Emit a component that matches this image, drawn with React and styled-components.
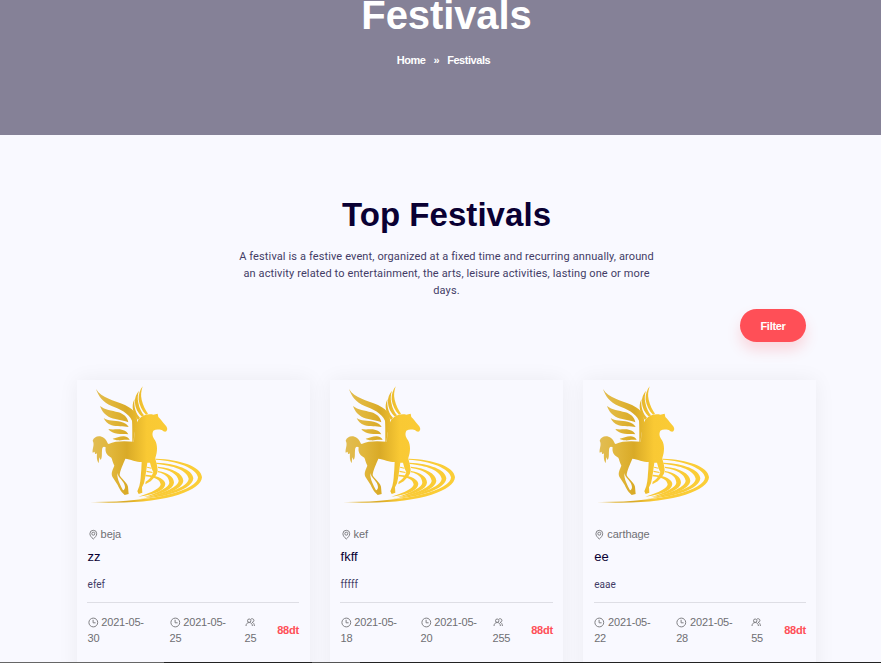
import React from "react";
import styled, { createGlobalStyle } from "styled-components";

const GlobalStyle = createGlobalStyle`
  * { box-sizing: border-box; }
  body { margin: 0; background: #f9f9ff; overflow: hidden; }
  h1, h2, h3, p { margin: 0; }
`;

const Page = styled.div`
  width: 893px;
  height: 663px;
  overflow: hidden;
  display: flex;
  flex-direction: column;
  background: #f9f9ff;
  font-family: "Liberation Sans", Arial, sans-serif;
`;

const Banner = styled.header`
  flex: 0 0 135px;
  background: #858197;
  color: #fff;
  display: flex;
  flex-direction: column;
  align-items: center;
`;

const BannerTitle = styled.h1`
  font-size: 40px;
  line-height: 30px;
  letter-spacing: -0.1px;
`;

const Breadcrumb = styled.nav`
  display: flex;
  gap: 8px;
  margin: 22px 0 0 -6px;
  font-size: 11px;
  line-height: 16px;
  font-weight: 700;
  letter-spacing: -0.45px;
`;

const Content = styled.main`
  flex: 0 0 527px;
  overflow: hidden;
  display: flex;
  flex-direction: column;
  align-items: center;
  padding-top: 59px;
`;

const Heading = styled.h2`
  font-size: 33px;
  line-height: 41px;
  letter-spacing: 0.05px;
  color: #0a0033;
`;

const Intro = styled.p`
  width: 422px;
  margin-top: 13px;
  font: 11px/17px Roboto, sans-serif;
  letter-spacing: 0.12px;
  text-align: center;
  color: #433c66;
`;

const Actions = styled.div`
  width: 739px;
  display: flex;
  justify-content: flex-end;
  padding: 10px 10px 0 0;
`;

const FilterButton = styled.button`
  width: 66px;
  height: 33px;
  padding: 0;
  border: 0;
  border-radius: 17px;
  background: #ff4f57;
  color: #fff;
  font: 700 11px "Liberation Sans", Arial, sans-serif;
  letter-spacing: -0.3px;
  box-shadow: 0 8px 14px rgba(255, 79, 87, 0.2);
`;

const Cards = styled.section`
  display: grid;
  grid-template-columns: repeat(3, 233px);
  gap: 20px;
  margin-top: 38px;
`;

const CardBox = styled.article`
  height: 300px;
  padding: 0 10px;
  display: flex;
  flex-direction: column;
  background: #f9f9ff;
  box-shadow: 0 0 20px rgba(0, 0, 0, 0.06);

  &:first-child { padding-right: 11px; }
  &:last-child { padding-left: 10.7px; }
`;

const Logo = styled.svg`
  display: block;
  flex: none;
  width: 130px;
  height: 130px;
  margin-left: -10px;
`;

const Place = styled.div`
  display: flex;
  align-items: center;
  gap: 2px;
  margin: 16px 0 0 0.6px;
  font-size: 11px;
  line-height: 16px;
  letter-spacing: -0.05px;
  color: #6f6f73;
`;

const Name = styled.h3`
  margin: 5px 0 0 0.6px;
  font-size: 13px;
  line-height: 20px;
  font-weight: 400;
  color: #0a0033;
`;

const Description = styled.p`
  margin: 9px 0 0 0.6px;
  font: 10px/17px Roboto, sans-serif;
  color: #433c66;
`;

const Details = styled.footer`
  display: grid;
  grid-template-columns: ${(p) => p.$columns} 1fr;
  margin-top: 9px;
  padding-top: 11px;
  border-top: 1px solid #dedee5;
  font-size: 11px;
  line-height: 16px;
  letter-spacing: -0.2px;
  color: #6f6f73;
`;

const Detail = styled.div`
  padding-left: 0.5px;
  svg { vertical-align: -2px; }
`;

const Price = styled.strong`
  align-self: center;
  text-align: right;
  color: #ff4f57;
`;

const Footing = styled.div`
  flex: 0 0 1px;
  background: linear-gradient(90deg, #666 0 164px, #222 164px 312px, #555 312px 360px, #222 360px);
`;

const LineIcon = styled.svg.attrs({ viewBox: "0 0 11 11", width: 11, height: 11, fill: "none", stroke: "#808084" })``;

const PinIcon = () => (
  <LineIcon>
    <path d="M5.3 10C3.4 8.3 1.9 6.7 1.9 4.7a3.4 3.4 0 0 1 6.8 0c0 2-1.5 3.6-3.4 5.3Z" />
    <circle cx="5.3" cy="4.7" r="1.5" />
  </LineIcon>
);

const ClockIcon = () => (
  <LineIcon>
    <circle cx="5.3" cy="5.5" r="4.4" />
    <path d="M5.1 2.8v3h2.5" />
  </LineIcon>
);

const PeopleIcon = () => (
  <LineIcon>
    <circle cx="4.2" cy="3.7" r="1.7" />
    <path d="M1 9c0-2 1.2-3.5 3.2-3.5S7.4 7 7.4 9M6 2.1a1.8 1.8 0 1 1 1 3.2c1.4.3 2.4 1.7 2.4 3.7" />
  </LineIcon>
);

const feathers = [
  "M78 57C95 85 130 90 165 105C200 122 203 140 201 165C193 185 192 200 191 216L187 216C187 190 187 165 186 152C175 128 150 118 125 108C98 97 85 78 78 57Z",
  "M90 108C105 120 125 121 145 127C160 131 173 142 175 157C160 149 140 150 122 143C105 136 96 124 90 108Z",
  "M101 144C113 153 135 151 152 155C166 158 173 164 176 171C160 168 140 171 125 166C112 161 105 153 101 144Z",
  "M115 177C128 180 145 176 158 180C168 183 172 187 175 193C160 190 148 194 135 190C126 187 119 183 115 177Z",
  "M128 206C140 205 150 198 162 199C172 200 176 204 179 210C165 207 155 212 145 211C138 210 132 209 128 206Z",
  "M218 49C213 65 212 75 215 89C219 105 226 120 234 131L228 134C216 122 208 105 206 89C205 72 210 60 218 49Z",
  "M207 62C203 75 202 85 205 98C208 115 215 127 222 136L216 140C204 128 196 115 195 98C194 82 199 72 207 62Z",
  "M194 87C192 98 193 108 196 119C200 132 205 137 210 143L204 150C194 138 189 125 188 112C188 100 190 94 194 87Z",
];

const body =
  "M192 215C193 185 195 165 206 148C216 136 235 130 250 134L263 131L265 141C273 148 276 155 285 164C292 171 294 178 289 184C284 187 280 183 275 180C265 178 257 178 250 182C245 192 248 200 255 211C263 225 263 245 256 264C257 274 263 286 263 302C262 315 252 322 242 334L226 343L227 335C236 330 244 322 250 306C246 300 243 290 240 278L232 278C229 300 227 318 222 340L216 352L217 368L206 372L202 364L208 348C213 330 212 315 214 298L215 276C200 276 180 268 166 266C160 282 150 300 149 315C152 325 170 335 174 350L176 372L164 375L155 366C150 360 145 350 143 345L127 320C122 308 129 298 133 287C127 275 127 268 124 263C108 255 105 244 107 232C100 228 96 232 96 242C95 255 97 262 92 270L88 262L86 280C80 272 80 262 81 250C76 255 74 250 74 245L68 248C66 235 75 225 68 212C72 198 90 194 102 204C112 212 112 222 116 222C135 212 165 213 192 215Z";

const rings = [
  "M258 266C330 268 395 290 396 322C394 365 270 409 60 396C250 398 385 360 384 322C380 295 320 272 258 269Z",
  "M259 278C320 281 368 298 370 325C368 356 300 381 205 388C290 374 355 350 356 326C352 302 310 286 259 282Z",
  "M264 290C310 295 338 310 340 332C338 356 290 376 225 383C285 368 325 350 326 332C322 312 300 299 264 294Z",
  "M264 303C295 308 312 322 312 338C310 358 275 373 220 382C270 366 298 350 298 338C297 322 285 311 264 307Z",
  "M227 314C270 317 285 330 286 342C284 360 260 373 205 380C250 367 272 353 272 343C270 332 260 322 226 319Z",
  "M230 302L248 306L247 309L229 306ZM232 290L244 293L244 296L231 293Z",
];

const FestivalLogo = ({ id }) => (
  <Logo viewBox="21 30 390 390">
    <defs>
      <linearGradient id={id} gradientUnits="userSpaceOnUse" x1="65" y1="0" x2="396" y2="0">
        <stop offset="0" stopColor="#e1bd55" />
        <stop offset="0.18" stopColor="#e1b63a" />
        <stop offset="0.32" stopColor="#d9aa27" />
        <stop offset="0.5" stopColor="#f9c934" />
        <stop offset="1" stopColor="#fbce37" />
      </linearGradient>
    </defs>
    <g fill={`url(#${id})`}>
      {[...feathers, ...rings, body].map((d) => <path key={d} d={d} />)}
    </g>
    <path d="M142 309C145 326 164 333 165 351C165 357 162 360 159 361C151 344 141 329 142 309Z" fill="#f9f9ff" />
  </Logo>
);

const festivals = [
  { place: "beja", name: "zz", text: "efef", start: "2021-05-30", end: "2021-05-25", people: 25, columns: "82px 75px" },
  { place: "kef", name: "fkff", text: "fffff", start: "2021-05-18", end: "2021-05-20", people: 255, columns: "80px 72px" },
  { place: "carthage", name: "ee", text: "eaae", start: "2021-05-22", end: "2021-05-28", people: 55, columns: "82px 75px" },
];

const FestivalCard = ({ festival: f }) => (
  <CardBox>
    <FestivalLogo id={`gold-${f.place}`} />
    <Place><PinIcon />{f.place}</Place>
    <Name>{f.name}</Name>
    <Description>{f.text}</Description>
    <Details $columns={`${f.columns} 30px`}>
      <Detail><ClockIcon /> {f.start.slice(0, 8)}<br />{f.start.slice(8)}</Detail>
      <Detail><ClockIcon /> {f.end.slice(0, 8)}<br />{f.end.slice(8)}</Detail>
      <Detail><PeopleIcon /><br />{f.people}</Detail>
      <Price>88dt</Price>
    </Details>
  </CardBox>
);

export default function App() {
  return (
    <>
      <GlobalStyle />
      <Page>
        <Banner>
          <BannerTitle>Festivals</BannerTitle>
          <Breadcrumb><span>Home</span><span>»</span><span>Festivals</span></Breadcrumb>
        </Banner>
        <Content>
          <Heading>Top Festivals</Heading>
          <Intro>
            A festival is a festive event, organized at a fixed time and recurring annually, around
            an activity related to entertainment, the arts, leisure activities, lasting one or more days.
          </Intro>
          <Actions><FilterButton>Filter</FilterButton></Actions>
          <Cards>{festivals.map((f) => <FestivalCard key={f.place} festival={f} />)}</Cards>
        </Content>
        <Footing />
      </Page>
    </>
  );
}
